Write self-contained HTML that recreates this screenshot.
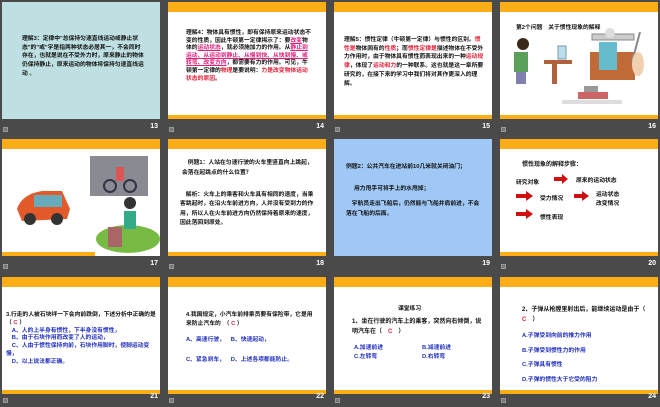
<!DOCTYPE html>
<html><head><meta charset="utf-8"><style>
body{margin:0;width:660px;height:407px;background:#4a4a4a;overflow:hidden;position:relative;font-family:"Liberation Sans","Noto Sans CJK SC",sans-serif}
.s{position:absolute;width:158px;height:117px;background:#fff;overflow:hidden}
.s.o:before{content:"";position:absolute;left:0;top:0;right:0;height:10px;background:#fdae16}
.s.o:after{content:"";position:absolute;left:0;bottom:0;right:0;height:4px;background:#fdae16}
.s.s17:after{right:65px}
.n{position:absolute;color:#fff;font-size:7px;font-weight:bold;width:20px;text-align:right}
.ic{position:absolute;width:3px;height:3px;border:1px solid #999;background:#777}
.t{position:absolute;font-size:5.8px;line-height:8px;font-weight:bold;color:#111}
.r{color:#e8213a}.b{color:#2230c0}.m{color:#e0207a;text-decoration:underline}
</style></head><body>

<div class="s" style="left:2px;top:2px;background:#bfe0e2"><div class="t" style="left:20px;top:33px;width:122px;line-height:8.7px">理解3：定律中"总保持匀速直线运动或静止状态"的"或"字是指两种状态必居其一，不会同时存在，也就是说在不受外力时，原来静止的物体仍保持静止，原来运动的物体将保持匀速直线运动 。</div></div>
<div class="n" style="left:138px;top:123px">13</div>

<div class="s o" style="left:168px;top:2px"><div class="t" style="left:18px;top:28px;width:126px;line-height:7.6px">理解4：物体具有惯性，即有保持原来运动状态不变的性质，因此牛顿第一定律揭示了：要<span class="m">改变</span>物体的<span class="m">运动状态</span>，就必须施加力的作用。从<span class="m">静止到运动、从运动到静止、从慢到快、从快到慢、或转弯、改变方向</span>，都需要有力的作用。可见，牛顿第一定律的<span class="r">物理</span>是要说明：<span class="r">力是改变物体运动状态的原因</span>。</div></div>
<div class="n" style="left:304px;top:123px">14</div>

<div class="s o" style="left:334px;top:2px"><div class="t" style="left:10px;top:34px;width:140px;line-height:8.7px">理解5：惯性定律（牛顿第一定律）与惯性的区别。<span class="r">惯性是</span>物体固有的<span class="r">性质</span>；而<span class="r">惯性定律是</span>描述物体在不受外力作用时，由于物体具有惯性而表现出来的一种<span class="r">运动规律</span>，体现了<span class="r">运动和力</span>的一种联系。这也就是这一章所要研究的，在接下来的学习中我们将对其作更深入的理解。</div></div>
<div class="n" style="left:470px;top:123px">15</div>

<div class="s o" style="left:500px;top:2px"><div class="t" style="left:16px;top:22px;width:140px">第2个问题　关于惯性现象的解释</div>
<svg style="position:absolute;left:0;top:0" width="158" height="117"><circle cx="23" cy="42" r="6" fill="#3a2a1a"/><rect x="14" y="50" width="14" height="20" fill="#5aa05a"/><rect x="16" y="70" width="10" height="12" fill="#8080b0"/><rect x="44" y="58" width="28" height="4" fill="#b0603a"/><rect x="52" y="62" width="5" height="20" fill="#b0603a"/><rect x="58" y="44" width="8" height="13" fill="#bde" stroke="#79a"/><rect x="92" y="32" width="42" height="6" fill="#ccc" stroke="#888"/><circle cx="110" cy="31" r="5" fill="#ddd"/><rect x="90" y="50" width="45" height="28" fill="#c06a38"/><rect x="99" y="40" width="18" height="28" fill="#6bc" /><path d="M140 30 L132 60" stroke="#888" stroke-width="2"/><ellipse cx="138" cy="62" rx="6" ry="12" fill="#f0d0b0"/><rect x="78" y="90" width="30" height="7" fill="#c66"/><rect x="84" y="84" width="14" height="6" fill="#999"/><rect x="62" y="98" width="60" height="4" fill="#ddd"/></svg></div>
<div class="n" style="left:636px;top:123px">16</div>

<div class="s o s17" style="left:2px;top:139px;">
<svg style="position:absolute;left:0;top:0" width="158" height="117"><path d="M15 70 Q20 55 40 52 L60 52 L68 70 L65 80 L20 82 Z" fill="#e25a2a"/><rect x="32" y="56" width="28" height="12" fill="#6ab"/><circle cx="28" cy="80" r="6" fill="#333"/><circle cx="55" cy="80" r="6" fill="#333"/><rect x="88" y="17" width="58" height="40" fill="#8a8a92"/><circle cx="108" cy="47" r="6" fill="none" stroke="#334" stroke-width="2"/><circle cx="128" cy="47" r="6" fill="none" stroke="#334" stroke-width="2"/><rect x="114" y="28" width="8" height="14" fill="#d55"/><ellipse cx="126" cy="100" rx="32" ry="14" fill="#7b4"/><rect x="106" y="88" width="14" height="20" fill="#a66"/><circle cx="128" cy="64" r="6" fill="#333"/><rect x="122" y="72" width="12" height="18" fill="#3a8"/></svg></div>
<div class="n" style="left:138px;top:260px">17</div>

<div class="s o" style="left:168px;top:139px"><div class="t" style="left:14px;top:20px;width:134px;line-height:9.5px">　例题1：人站在匀速行驶的火车里竖直向上跳起，会落在起跳点的什么位置？</div><div class="t" style="left:12px;top:52px;width:136px;line-height:9.3px">　解析：火车上的乘客和火车具有相同的速度，当乘客跳起时，在沿火车前进方向，人并没有受到力的作用，所以人在火车前进方向仍然保持着原来的速度，因此落回到原处。</div></div>
<div class="n" style="left:304px;top:260px">18</div>

<div class="s" style="left:334px;top:139px;background:#9fc8f6"><div class="t" style="left:12px;top:24px;width:136px;line-height:9px">例题2：公共汽车在进站前10几米就关闭油门；</div><div class="t" style="left:20px;top:46px;width:130px">用力甩手可将手上的水甩掉；</div><div class="t" style="left:12px;top:60px;width:136px;line-height:10px">　宇航员走出飞船后，仍然能与飞船并肩前进，不会落在飞船的后面。</div></div>
<div class="n" style="left:470px;top:260px">19</div>

<div class="s o" style="left:500px;top:139px"><div class="t" style="left:22px;top:22px;font-size:6px">惯性现象的解释步骤：</div>
<div class="t" style="left:16px;top:40px">研究对象</div><div class="t" style="left:76px;top:38px">原来的运动状态</div>
<div class="t" style="left:40px;top:56px">受力情况</div><div class="t" style="left:96px;top:52px;line-height:9px">运动状态<br>改变情况</div>
<div class="t" style="left:40px;top:75px">惯性表现</div>
<svg style="position:absolute;left:0;top:0" width="158" height="117"><path d="M54 38h8v-3l6 5-6 5v-3h-8z" fill="#d01010"/><path d="M16 55h10v-3l7 5-7 5v-3h-10z" fill="#d01010"/><path d="M74 55h8v-3l7 5-7 5v-3h-8z" fill="#d01010"/><path d="M16 73h10v-3l7 5-7 5v-3h-10z" fill="#d01010"/></svg></div>
<div class="n" style="left:636px;top:260px">20</div>

<div class="s o" style="left:2px;top:277px"><div class="t" style="left:4px;top:35px;width:152px;line-height:7.8px">3.行走的人被石块绊一下会向前跌倒，下述分析中正确的是　（<span class="r"> C </span>）<br><span class="b">　A、人的上半身有惯性，下半身没有惯性，<br>　B、由于石块作用而改变了人的运动，<br>　C、人由于惯性保持向前，石块作用脚时，使脚运动变慢，<br>　D、以上说法都正确。</span></div></div>
<div class="n" style="left:138px;top:393px">21</div>

<div class="s o" style="left:168px;top:277px"><div class="t" style="left:18px;top:34px;width:132px;line-height:9px">4.我国规定，小汽车前排乘员要有保险带，它是用来防止汽车的　（<span class="r"> C </span>）</div><div class="t b" style="left:18px;top:58px;width:130px;line-height:10px">A、高速行驶，　B、快速起动，<br><br>C、紧急刹车，　D、上述各项都能防止。</div></div>
<div class="n" style="left:304px;top:393px">22</div>

<div class="s o" style="left:334px;top:277px"><div class="t" style="left:64px;top:28px">课堂练习</div><div class="t" style="left:18px;top:40px;width:132px;line-height:10px;font-size:6px">1、坐在行驶的汽车上的乘客，突然向右倾倒，说明汽车在（<span class="r">　C　</span>）</div><div class="t b" style="left:20px;top:67px;line-height:9px">A.加速前进<br>C.左转弯</div><div class="t b" style="left:88px;top:67px;line-height:9px">B.减速前进<br>D.右转弯</div></div>
<div class="n" style="left:470px;top:393px">23</div>

<div class="s o" style="left:500px;top:277px"><div class="t" style="left:22px;top:28px;width:130px;line-height:10px;font-size:6px">2、子弹从枪膛里射出后，能继续运动是由于（<span class="r">　C　</span>）</div><div class="t b" style="left:22px;top:52px;line-height:14.5px">A.子弹受到向前的推力作用<br>B.子弹受到惯性力的作用<br>C.子弹具有惯性<br>D.子弹的惯性大于它受的阻力</div></div>
<div class="n" style="left:636px;top:393px">24</div>

<div class="ic" style="left:3px;top:127px"></div><div class="ic" style="left:169px;top:127px"></div><div class="ic" style="left:335px;top:127px"></div><div class="ic" style="left:501px;top:127px"></div>
<div class="ic" style="left:3px;top:264px"></div><div class="ic" style="left:169px;top:264px"></div><div class="ic" style="left:501px;top:264px"></div>
<div class="ic" style="left:3px;top:398px"></div><div class="ic" style="left:169px;top:398px"></div><div class="ic" style="left:335px;top:398px"></div><div class="ic" style="left:501px;top:398px"></div>
</body></html>
